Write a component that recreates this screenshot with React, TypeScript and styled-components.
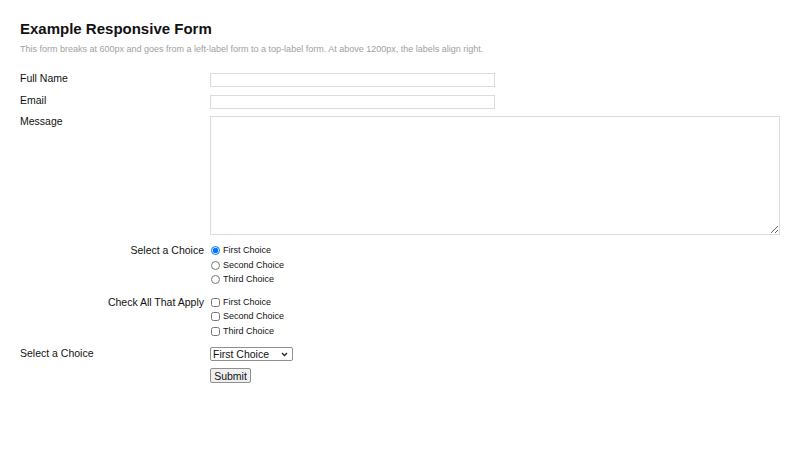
import styled, { createGlobalStyle } from "styled-components";

const Global = createGlobalStyle`
    body{
        margin: 0;
        background: #FFFFFF;
        font-family: "Liberation Sans", Arial, sans-serif;
        color: #111111;
    }
`

const Page = styled.div`
    padding: 19px 20px 0 20px;
    >h1{
        margin: 0;
        font-size: 15px;
        font-weight: bold;
        line-height: 20px;
    }
    >p{
        margin: 4px 0 0 0;
        font-size: 9px;
        line-height: 12px;
        color: #a0a0a0;
    }
`

const Form = styled.form`
    margin-top: 18px;
    display: grid;
    grid-template-columns: 184px 1fr;
    column-gap: 6px;
    row-gap: 8px;
    align-items: start;
`

const Label = styled.label<{ $right?: boolean; $offset?: number }>`
    font-size: 10.5px;
    line-height: 12px;
    text-align: ${p => p.$right ? "right" : "left"};
    margin-top: ${p => p.$offset ?? 0}px;
`

const TextInput = styled.input`
    width: 285px;
    height: 14px;
    box-sizing: border-box;
    border: 1px solid #dcdcdc;
    margin: 0;
    padding: 0 2px;
    font-size: 10px;
`

const TextArea = styled.textarea`
    width: 570px;
    height: 119px;
    box-sizing: border-box;
    border: 1px solid #dcdcdc;
    margin: -1px 0 0 0;
    padding: 2px;
    font-size: 10px;
`

const Options = styled.div<{ $shift: number }>`
    display: flex;
    flex-direction: column;
    gap: 1px;
    margin: ${p => p.$shift}px 0 ${p => -p.$shift}px 0;
`

const Option = styled.label`
    display: flex;
    align-items: center;
    font-size: 9px;
    line-height: 13.5px;
    >input{
        width: 9px;
        height: 9px;
        margin: 0 3px 0 1px;
    }
`

const SelectWrap = styled.div`
    position: relative;
    width: 83px;
    height: 14px;
    margin-top: 3px;
    >svg{
        display: block;
        position: absolute;
        right: 5px;
        top: 5px;
        pointer-events: none;
    }
`

const Select = styled.select`
    appearance: none;
    display: block;
    width: 83px;
    height: 14px;
    box-sizing: border-box;
    font-family: "Liberation Sans", Arial, sans-serif;
    font-size: 10.5px;
    line-height: 12px;
    padding: 0 0 0 2px;
    margin: 0;
    border: 1px solid #8f8f8f;
    border-radius: 2px;
    background: #fff;
    color: #111;
`

const Submit = styled.button`
    width: 41px;
    height: 15px;
    margin-top: -1px;
    font-family: "Liberation Sans", Arial, sans-serif;
    font-size: 10.5px;
    line-height: 12px;
    padding: 0;
    border: 1px solid #8f8f8f;
    border-radius: 2px;
    background: #efefef;
    color: #111;
`

const Empty = styled.div``

function App() {
    return <Page>
        <Global />
        <h1>Example Responsive Form</h1>
        <p>This form breaks at 600px and goes from a left-label form to a top-label form. At above 1200px, the labels align right.</p>
        <Form>
            <Label $offset={-1}>Full Name</Label>
            <TextInput type="text" />
            <Label $offset={-1}>Email</Label>
            <TextInput type="email" />
            <Label $offset={-2}>Message</Label>
            <TextArea />
            <Label $right $offset={1}>Select a Choice</Label>
            <Options $shift={1}>
                <Option><input type="radio" name="choice" defaultChecked />First Choice</Option>
                <Option><input type="radio" name="choice" />Second Choice</Option>
                <Option><input type="radio" name="choice" />Third Choice</Option>
            </Options>
            <Label $right $offset={2}>Check All That Apply</Label>
            <Options $shift={2}>
                <Option><input type="checkbox" />First Choice</Option>
                <Option><input type="checkbox" />Second Choice</Option>
                <Option><input type="checkbox" />Third Choice</Option>
            </Options>
            <Label $offset={3}>Select a Choice</Label>
            <SelectWrap>
                <Select defaultValue="1">
                    <option value="1">First Choice</option>
                    <option value="2">Second Choice</option>
                    <option value="3">Third Choice</option>
                </Select>
                <svg width="7" height="5" viewBox="0 0 7 5">
                    <path d="M1 1l2.5 2.5L6 1" fill="none" stroke="#222" strokeWidth="1.3" />
                </svg>
            </SelectWrap>
            <Empty />
            <Submit type="submit">Submit</Submit>
        </Form>
    </Page>
}
export default App;
